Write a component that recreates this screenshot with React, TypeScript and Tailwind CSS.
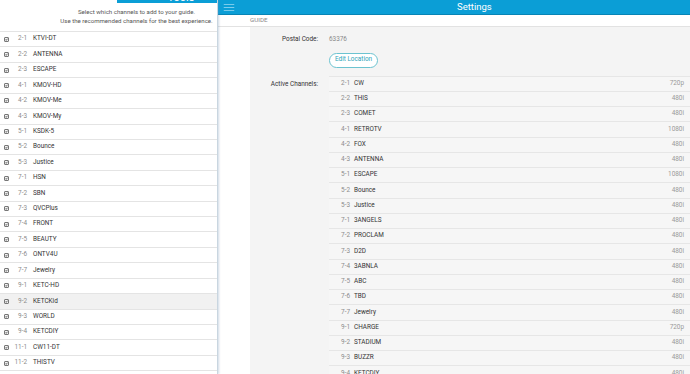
import React from "react";

type Pick = { num: string; name: string; active?: boolean };
type Chan = { num: string; name: string; res: string };

const picks: Pick[] = [
  { num: "2-1", name: "KTVI-DT" },
  { num: "2-2", name: "ANTENNA" },
  { num: "2-3", name: "ESCAPE" },
  { num: "4-1", name: "KMOV-HD" },
  { num: "4-2", name: "KMOV-Me" },
  { num: "4-3", name: "KMOV-My" },
  { num: "5-1", name: "KSDK-5" },
  { num: "5-2", name: "Bounce" },
  { num: "5-3", name: "Justice" },
  { num: "7-1", name: "HSN" },
  { num: "7-2", name: "SBN" },
  { num: "7-3", name: "QVCPlus" },
  { num: "7-4", name: "FRONT" },
  { num: "7-5", name: "BEAUTY" },
  { num: "7-6", name: "ONTV4U" },
  { num: "7-7", name: "Jewelry" },
  { num: "9-1", name: "KETC-HD" },
  { num: "9-2", name: "KETCKid", active: true },
  { num: "9-3", name: "WORLD" },
  { num: "9-4", name: "KETCDIY" },
  { num: "11-1", name: "CW11-DT" },
  { num: "11-2", name: "THISTV" },
  { num: "11-3", name: "COMET" },
];

const channels: Chan[] = [
  { num: "2-1", name: "CW", res: "720p" },
  { num: "2-2", name: "THIS", res: "480i" },
  { num: "2-3", name: "COMET", res: "480i" },
  { num: "4-1", name: "RETROTV", res: "1080i" },
  { num: "4-2", name: "FOX", res: "480i" },
  { num: "4-3", name: "ANTENNA", res: "480i" },
  { num: "5-1", name: "ESCAPE", res: "1080i" },
  { num: "5-2", name: "Bounce", res: "480i" },
  { num: "5-3", name: "Justice", res: "480i" },
  { num: "7-1", name: "3ANGELS", res: "480i" },
  { num: "7-2", name: "PROCLAM", res: "480i" },
  { num: "7-3", name: "D2D", res: "480i" },
  { num: "7-4", name: "3ABNLA", res: "480i" },
  { num: "7-5", name: "ABC", res: "480i" },
  { num: "7-6", name: "TBD", res: "480i" },
  { num: "7-7", name: "Jewelry", res: "480i" },
  { num: "9-1", name: "CHARGE", res: "720p" },
  { num: "9-2", name: "STADIUM", res: "480i" },
  { num: "9-3", name: "BUZZR", res: "480i" },
  { num: "9-4", name: "KETCDIY", res: "480i" },
];

const Check = () => (
  <span className="flex h-[5px] w-[5px] items-center justify-center rounded-[1px] border-[0.5px] border-[#777] bg-[#f3f3f3]">
    <svg viewBox="0 0 8 8" className="h-[5px] w-[5px]">
      <path d="M1.2 4.2 L3.2 6.2 L6.8 1.8" fill="none" stroke="#222" strokeWidth="1.8" />
    </svg>
  </span>
);

const ChannelPicker = () => (
  <div className="relative z-10 flex w-[218px] shrink-0 flex-col border-r border-[#c9d6e0] bg-white shadow-[1px_0_2px_rgba(120,150,180,0.35)]">
    <div className="flex h-[4px]">
      <div className="w-[117px]" />
      <div className="flex flex-1 justify-center overflow-hidden bg-[#0b9ed6] pl-[28px]">
        <span className="-mt-[7px] text-[11px] leading-[10px] text-white">Tools</span>
      </div>
    </div>
    <div className="whitespace-nowrap pl-[56px] pt-[4px] text-center text-[6.1px] leading-[9px] text-[#555]">
      <p>Select which channels to add to your guide.</p>
      <p>Use the recommended channels for the best experience.</p>
    </div>
    <div className="mt-[6px] flex flex-col">
      {picks.map((p) => (
        <div
          key={p.num}
          className={`flex h-[15.43px] shrink-0 items-center border-t border-[#e4e4e4] text-[6.4px] ${p.active ? "bg-[#f1f1f1]" : ""}`}
        >
          <div className="flex w-[12px] justify-center pl-[1px]">
            <Check />
          </div>
          <span className="w-[15px] text-right text-[#8c8c8c]">{p.num}</span>
          <span className="pl-[6px] text-[#333]">{p.name}</span>
        </div>
      ))}
    </div>
  </div>
);

const Settings = () => (
  <div className="flex min-w-0 flex-1 flex-col">
    <div className="flex h-[15px] shrink-0 items-center border-b border-[#0784b5] bg-[#0b9ed6]">
      <svg viewBox="0 0 12 8" className="ml-[5px] h-[7px] w-[12px]">
        <path d="M0 0.5 H12 M0 4 H12 M0 7.5 H12" stroke="#8fd3ef" strokeWidth="1" />
      </svg>
      <span className="ml-[222px] text-[9.5px] text-white">Settings</span>
    </div>
    <div className="flex h-[12px] shrink-0 items-center border-b border-[#e2e2e2] pl-[32px] text-[6.2px] text-[#888]">
      GUIDE
    </div>
    <div className="flex flex-1">
      <div className="w-[32px] shrink-0 bg-white" />
      <div className="flex-1 bg-[#f4f4f4] pt-[8px] text-[6.4px]">
        <div className="flex items-center">
          <span className="w-[68px] text-right text-[#333]">Postal Code:</span>
          <span className="pl-[11px] text-[#888]">63376</span>
        </div>
        <div className="mt-[8px] pl-[79px]">
          <button className="h-[15px] rounded-full border border-[#6cc3d0] bg-white px-[5px] text-[6.4px] text-[#2fa3b8]">
            Edit Location
          </button>
        </div>
        <div className="mt-[8px] flex">
          <span className="w-[68px] pt-[4px] text-right text-[#333]">Active Channels:</span>
          <div className="ml-[11px] flex-1 border-t border-[#e6e6e6]">
            {channels.map((c) => (
              <div
                key={c.num}
                className="flex h-[15.26px] items-center border-b border-[#e6e6e6] bg-[#f6f6f6] pr-[6px]"
              >
                <span className="w-[21px] text-right text-[#8c8c8c]">{c.num}</span>
                <span className="flex-1 pl-[4px] text-[#333]">{c.name}</span>
                <span className="text-[#999]">{c.res}</span>
              </div>
            ))}
          </div>
        </div>
      </div>
    </div>
  </div>
);

export default function App() {
  return (
    <div className="flex h-[374px] w-[690px] overflow-hidden bg-white font-['Roboto',sans-serif]">
      <ChannelPicker />
      <Settings />
    </div>
  );
}
